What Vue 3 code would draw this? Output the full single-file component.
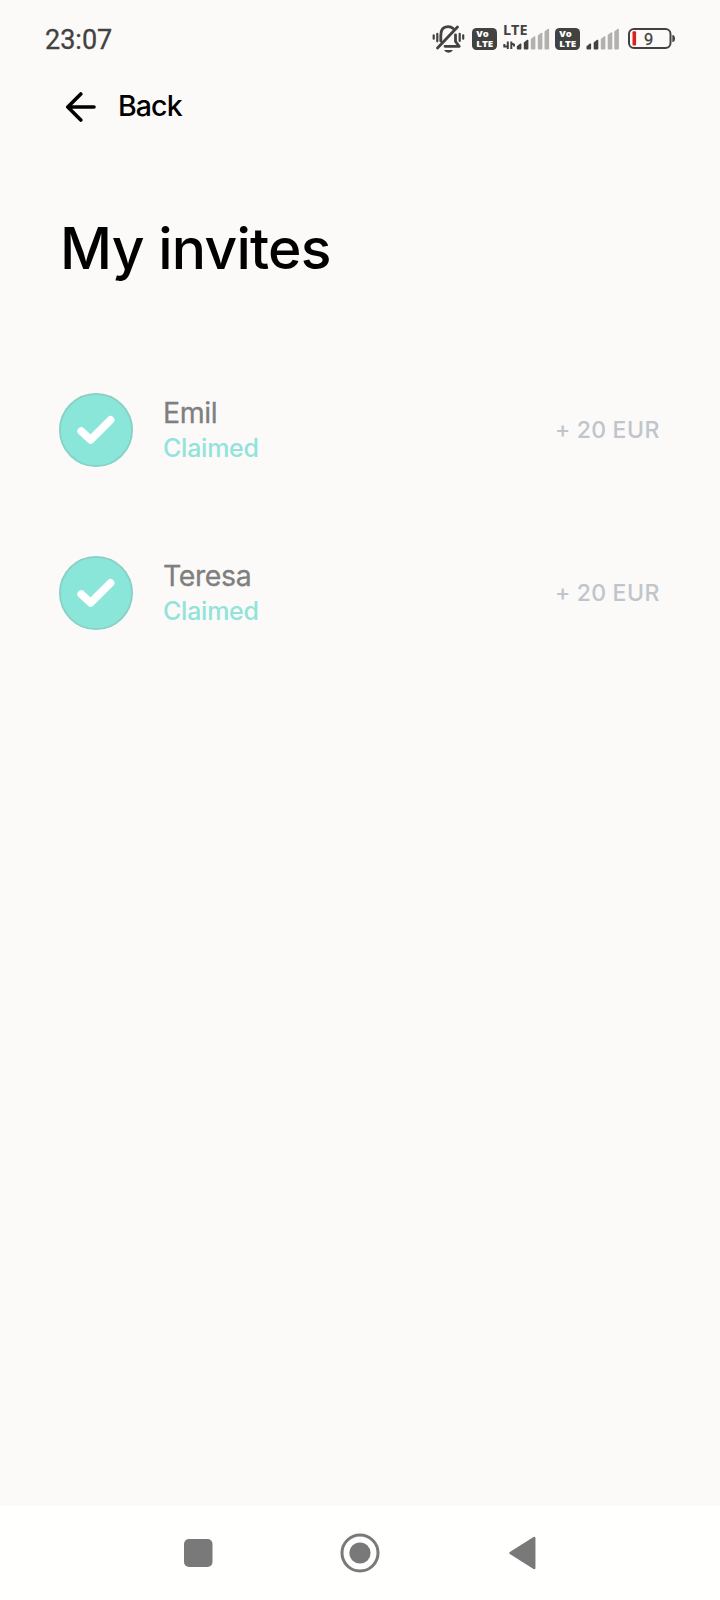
<script setup>
const invites = [
  { name: 'Emil', status: 'Claimed', reward: '+ 20 EUR', key: 'emil' },
  { name: 'Teresa', status: 'Claimed', reward: '+ 20 EUR', key: 'teresa' },
]
const firstBars = [
  { x: 516.8, y: 43.3, h: 5.5, on: true },
  { x: 523.8, y: 39.5, h: 9.5, on: true },
  { x: 530.8, y: 36, h: 13, on: false },
  { x: 537.8, y: 32.5, h: 16.5, on: false },
  { x: 544.5, y: 28.5, h: 20.5, on: false },
]
const secondBars = [
  { x: 586.5, y: 43.3, h: 5.5, on: true },
  { x: 593.7, y: 39.5, h: 9.5, on: true },
  { x: 600.8, y: 36, h: 13, on: false },
  { x: 607.7, y: 32, h: 17, on: false },
  { x: 614.3, y: 28.5, h: 20.5, on: false },
]
function barPath(b) {
  const right = b.x + 4.6
  const bottom = b.y + b.h + 0.6
  return `M${b.x} ${b.y + 3}L${right - 1.2} ${b.y + 0.3}Q${right} ${b.y} ${right} ${b.y + 1}V${bottom - 1}Q${right} ${bottom} ${right - 1} ${bottom}H${b.x + 1}Q${b.x} ${bottom} ${b.x} ${bottom - 1}Z`
}
</script>

<template>
  <div class="screen">
    <header class="status">
      <span class="clock">23:07</span>
      <svg class="system" viewBox="428 18 252 42" width="252" height="42">
        <g fill="none" stroke="#424240" stroke-width="2.8" stroke-linecap="round" stroke-linejoin="round">
          <path d="M440.8 41V35.5Q440.8 26.7 448 26.7Q451.2 26.7 453.2 28.6M455.5 35V41.5L459.2 46.3H445" />
          <path d="M437.5 48L457.5 27" />
          <path d="M433.7 35.3V38.7M437.3 33.8V41.3M459.7 33.8V41M463.2 35.3V38.7" stroke-width="2.2" />
        </g>
        <path d="M444 50H453Q451.5 52.7 448.5 52.7Q445.5 52.7 444 50Z" fill="#424240" />
        <g v-for="x in [472, 555]" :key="x">
          <rect :x="x" y="28" width="25" height="22" rx="4.5" fill="#424240" />
          <text class="volte" :x="x + 4.3" y="37.2" textLength="12.5" lengthAdjust="spacingAndGlyphs">Vo</text>
          <text class="volte" :x="x + 4.3" y="47" textLength="17" lengthAdjust="spacingAndGlyphs">LTE</text>
        </g>
        <text class="lte" x="503" y="34.8" textLength="24.5" lengthAdjust="spacingAndGlyphs">LTE</text>
        <path d="M507.8 41.5V49M504.3 44V46.5H507.8M511.3 49V41.5M511.3 43L514 44.5V46.5" fill="none" stroke="#424240" stroke-width="2" />
        <path v-for="b in firstBars" :key="b.x" :d="barPath(b)" :fill="b.on ? '#424240' : '#b2b1ae'" />
        <path v-for="b in secondBars" :key="b.x" :d="barPath(b)" :fill="b.on ? '#424240' : '#b2b1ae'" />
        <rect x="629" y="29" width="41.5" height="19" rx="5" fill="none" stroke="#424240" stroke-width="2" />
        <rect x="632.5" y="31.3" width="3.6" height="14.2" rx="1" fill="#dc201d" />
        <path d="M672.3 35Q675 35 675 38.5Q675 42 672.3 42Z" fill="#424240" />
        <text class="level" x="648.7" y="44.7" text-anchor="middle">9</text>
      </svg>
    </header>

    <nav class="back">
      <svg viewBox="0 0 32 32" width="32" height="32" fill="none" stroke="#000" stroke-width="3.6" stroke-linecap="round" stroke-linejoin="round">
        <path d="M29 17H2.8M15.8 4L2.8 17L15.8 30" />
      </svg>
      <span>Back</span>
    </nav>

    <h1>My invites</h1>

    <ul class="invites">
      <li v-for="invite in invites" :key="invite.key">
        <svg class="badge" viewBox="0 0 74 74" width="74" height="74">
          <circle cx="37" cy="37" r="36.1" fill="#8be6da" stroke="#88cfc5" stroke-width="1.8" />
          <path d="M22.3 38.2L31.7 46.8L51.5 27" fill="none" stroke="#fff" stroke-width="7.8" stroke-linecap="round" stroke-linejoin="round" />
        </svg>
        <div class="person">
          <span class="name">{{ invite.name }}</span>
          <span class="claim">{{ invite.status }}</span>
        </div>
        <span class="reward">{{ invite.reward }}</span>
      </li>
    </ul>

    <footer>
      <svg viewBox="0 0 40 40" width="40" height="40"><rect x="6" y="6" width="28.5" height="28" rx="5" fill="#797979" /></svg>
      <svg viewBox="0 0 40 40" width="40" height="40">
        <circle cx="20" cy="20" r="18" fill="none" stroke="#797979" stroke-width="3" />
        <circle cx="20" cy="20" r="10.6" fill="#797979" />
      </svg>
      <svg viewBox="0 0 40 40" width="40" height="40"><path d="M8.5 20L32.2 5V35Z" fill="#797979" stroke="#797979" stroke-width="2.5" stroke-linejoin="round" /></svg>
    </footer>
  </div>
</template>

<style>
body { margin: 0; }
</style>

<style scoped>
.screen {
  display: flex;
  flex-direction: column;
  width: 720px;
  height: 1600px;
  overflow: hidden;
  background: #fbfaf9;
  font-family: Inter, "Liberation Sans", sans-serif;
}
.status {
  display: flex;
  justify-content: space-between;
  height: 60px;
  padding: 18px 40px 0 45px;
  box-sizing: border-box;
}
.clock {
  margin-top: 1px;
  font: 400 27px/42px Roboto, sans-serif;
  color: #424240;
  -webkit-text-stroke: 0.3px #424240;
}
.system { display: block; }
.volte { font: 800 8.4px/1 "Open Sans", sans-serif; fill: #fff; }
.lte { font: 700 14px "Open Sans", sans-serif; fill: #424240; }
.level { font: 400 16.5px Roboto, sans-serif; fill: #424240; stroke: #424240; stroke-width: 0.3px; }
.back {
  display: flex;
  align-items: center;
  gap: 21px;
  height: 56px;
  margin-top: 18px;
  padding-left: 65px;
  font-size: 28.5px;
  font-weight: 500;
  letter-spacing: -0.9px;
  color: #000;
}
.back span { margin-bottom: 2px; }
h1 {
  margin: 75px 0 0 60px;
  font-size: 57px;
  line-height: 80px;
  font-weight: 500;
  letter-spacing: -0.75px;
  color: #000;
}
.invites {
  display: flex;
  flex-direction: column;
  gap: 89px;
  margin: 104px 60px 0 59px;
  padding: 0;
  list-style: none;
}
li {
  display: flex;
  align-items: center;
  height: 74px;
}
.person {
  display: flex;
  flex-direction: column;
  margin-left: 30px;
  flex: 1;
}
.name {
  font-size: 28.5px;
  line-height: 36px;
  color: #7f7f7f;
  letter-spacing: -0.4px;
  -webkit-text-stroke: 0.3px #7f7f7f;
}
.claim {
  font-size: 25px;
  line-height: 34px;
  font-weight: 500;
  color: #92e3d9;
  letter-spacing: -0.25px;
}
.reward {
  font-size: 23px;
  line-height: 30px;
  font-weight: 500;
  letter-spacing: 0.55px;
  word-spacing: -0.9px;
  color: #c0c5cc;
}
footer {
  display: flex;
  justify-content: center;
  gap: 122px;
  height: 94px;
  margin-top: auto;
  padding-top: 27px;
  box-sizing: border-box;
  background: #fffffe;
}
</style>
